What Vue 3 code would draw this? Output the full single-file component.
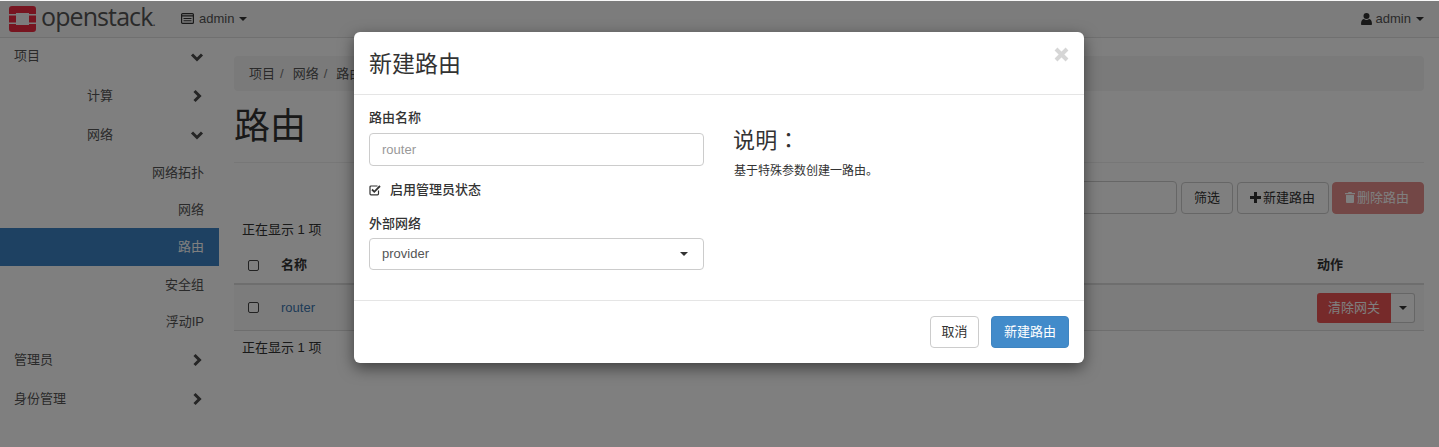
<script setup>
const tops = {
  project: '项目', compute: '计算', network: '网络'
}
const subs = [
  { label: '网络拓扑' },
  { label: '网络' },
  { label: '路由', active: true },
  { label: '安全组' },
  { label: '浮动IP' }
]
</script>

<template>
  <div class="page">
    <header class="navbar">
      <div class="brand">
        <svg class="logo" width="27" height="26" viewBox="0 0 27 26">
          <path fill="#ee2a40" d="M3 0h21a3 3 0 0 1 3 3v5h-7V7H7v1H0V3a3 3 0 0 1 3-3zM0 9.500h7v7H0zM20 9.500h7v7h-7zM0 18h7v1h13v-1h7v5a3 3 0 0 1-3 3H3a3 3 0 0 1-3-3z"/>
        </svg>
        <span class="brand-text">openstack<span class="dot">.</span></span>
      </div>
      <div class="nav-project">
        <svg width="13" height="11" viewBox="0 0 13 11"><rect x=".6" y=".6" width="11.8" height="9.8" rx="1" fill="none" stroke="#333" stroke-width="1.2"/><path d="M1 2.200h11v1.400H1zM2.500 5h8v1h-8zM2.500 7.200h8v1h-8z" fill="#333"/></svg>
        <span>admin</span><i class="caret"></i>
      </div>
      <div class="nav-user">
        <svg width="11" height="12" viewBox="0 0 11 12"><circle cx="5.500" cy="3" r="3" fill="#333"/><path d="M0 11c0-3.500 1.500-5 3-5 .7.600 1.500 1 2.500 1s1.800-.4 2.500-1c1.500 0 3 1.500 3 5 0 .6-.5 1-1 1H1c-.5 0-1-.4-1-1z" fill="#333"/></svg>
        <span>admin</span><i class="caret"></i>
      </div>
    </header>

    <div class="layout">
      <nav class="sidebar">
        <div class="item top first">{{ tops.project }}<svg class="chev" width="14" height="14" viewBox="0 0 14 14"><path d="M2 4.500l5 5 5-5"/></svg></div>
        <div class="item mid">{{ tops.compute }}<svg class="chev" width="14" height="14" viewBox="0 0 14 14"><path d="M4.500 2l5 5-5 5"/></svg></div>
        <div class="item mid">{{ tops.network }}<svg class="chev" width="14" height="14" viewBox="0 0 14 14"><path d="M2 4.500l5 5 5-5"/></svg></div>
        <div v-for="s in subs" :key="s.label + (s.active ? 1 : 0)" class="sub" :class="{ active: s.active }">{{ s.label }}</div>
        <div class="item top">管理员<svg class="chev" width="14" height="14" viewBox="0 0 14 14"><path d="M4.500 2l5 5-5 5"/></svg></div>
        <div class="item top">身份管理<svg class="chev" width="14" height="14" viewBox="0 0 14 14"><path d="M4.500 2l5 5-5 5"/></svg></div>
      </nav>

      <main class="content">
        <div class="breadcrumb"><span>项目</span><em>/</em><span>网络</span><em>/</em><span>路由</span></div>
        <h1 class="title">路由</h1>
        <div class="toolbar">
          <div class="filter-input"></div>
          <button class="btn">筛选</button>
          <button class="btn btn-add">
            <svg width="11" height="11" viewBox="0 0 11 11"><path d="M4 0h3v4h4v3H7v4H4V7H0V4h4z" fill="#333"/></svg>
            新建路由
          </button>
          <button class="btn btn-del">
            <svg width="10" height="11" viewBox="0 0 10 11"><path d="M3.500 0h3l.5 1h3v1.200H0V1h3zM1 3h8v7a1 1 0 0 1-1 1H2a1 1 0 0 1-1-1z" fill="#fff"/></svg>
            删除路由
          </button>
        </div>
        <div class="count">正在显示 1 项</div>
        <div class="thead">
          <i class="check"></i><b class="col-name">名称</b><b class="col-act">动作</b>
        </div>
        <div class="trow">
          <i class="check"></i><a class="col-name link">router</a>
          <div class="col-act split">
            <span class="split-main">清除网关</span><span class="split-caret"><i class="caret dark"></i></span>
          </div>
        </div>
        <div class="count bottom">正在显示 1 项</div>
      </main>
    </div>

    <div class="backdrop"></div>

    <section class="modal">
      <div class="modal-head">
        <h3>新建路由</h3>
        <svg class="close" width="15" height="15" viewBox="0 0 15 15"><path d="M2 2l11 11M13 2L2 13"/></svg>
      </div>
      <div class="modal-body">
        <div class="form-col">
          <label class="lbl">路由名称</label>
          <div class="field placeholder">router</div>
          <div class="checkline">
            <svg width="12" height="12" viewBox="0 0 12 12"><path d="M9.500 6.500V9.800a1 1 0 0 1-1 1H2a1 1 0 0 1-1-1V3a1 1 0 0 1 1-1h6.500" fill="none" stroke="#333" stroke-width="1.200"/><path d="M3 5.500l2.300 2.300L11 2" fill="none" stroke="#333" stroke-width="1.800"/></svg>
            <b>启用管理员状态</b>
          </div>
          <label class="lbl second">外部网络</label>
          <div class="field select"><span>provider</span><i class="caret"></i></div>
        </div>
        <div class="help-col">
          <h3>说明：</h3>
          <p>基于特殊参数创建一路由。</p>
        </div>
      </div>
      <div class="modal-foot">
        <button class="mbtn cancel">取消</button>
        <button class="mbtn primary">新建路由</button>
      </div>
    </section>
  </div>
</template>

<style>
html, body { margin: 0; padding: 0; background: #fff; }
</style>

<style scoped>
* { box-sizing: border-box; }
.page {
  position: relative;
  width: 1439px;
  height: 447px;
  overflow: hidden;
  background: #fff;
  color: #333;
  font: 13px/18px "Liberation Sans", "Noto Sans CJK SC", sans-serif;
}
.navbar {
  height: 38px;
  display: flex;
  align-items: center;
  background: #f8f8f8;
  border-bottom: 1px solid #e0e0e0;
  padding: 0 15px 0 9px;
}
.brand { display: flex; align-items: center; gap: 5px; width: 172px; }
.logo { width: 27px; height: 26px; flex: none; }
.brand-text { font: 500 25px/30px "Open Sans", sans-serif; letter-spacing: -0.9px; color: #555; }
.dot { font-size: 12px; }
.nav-project { display: flex; align-items: center; gap: 5px; color: #555; }
.nav-user { margin-left: auto; display: flex; align-items: center; gap: 4px; color: #555; }
.nav-user .caret { margin-left: 1px; }
.caret { display: inline-block; width: 0; height: 0; margin-left: 0; border-top: 4px solid #333; border-left: 4px solid transparent; border-right: 4px solid transparent; }

.layout { display: flex; }
.sidebar { width: 219px; flex: none; }
.item { height: 39px; display: flex; align-items: center; justify-content: space-between; padding: 0 15px 0 14px; color: #555; font-size: 13px; }
.item.first { height: 38px; padding-bottom: 2px; }
.item.first .chev { margin-top: 2px; }
.mid { padding-left: 87px; }
.sub { height: 37.4px; display: flex; align-items: center; justify-content: flex-end; padding-right: 15px; color: #555; }
.sub.active { background: #3d82c4; color: #fff; margin-top: -1px; height: 38.4px; }
.chev path { fill: none; stroke: #4b4b4b; stroke-width: 3; }

.content { flex: none; width: 1190px; margin-left: 15px; }
.breadcrumb { margin-top: 18px; height: 35px; background: #f5f5f5; border-radius: 4px; padding: 0 15px; display: flex; align-items: center; color: #555; }
.breadcrumb em { font-style: normal; margin: 0 9px 0 5px; color: #777; }
.title { margin: 0; height: 72px; padding-top: 14px; border-bottom: 1px solid #eee; font: 400 36px/43px "Liberation Sans", "Noto Sans CJK SC", sans-serif; color: #333; }
.toolbar { margin-top: 18px; height: 33px; display: flex; justify-content: flex-end; align-items: center; gap: 4px; }
.filter-input { width: 300px; height: 33px; border: 1px solid #ccc; border-radius: 4px; background: #fff; }
.btn { height: 32px; padding: 0 12px; border: 1px solid #ccc; border-radius: 4px; background: #fff; color: #333; font: inherit; display: flex; align-items: center; gap: 2px; }
.btn-add { width: 92px; }
.btn + .btn-del { margin-left: -1px; width: 92px; }
.btn-del { background: #d9534f; border-color: #d9534f; color: #fff; opacity: .65; }
.count { margin-top: 7px; height: 18px; padding-left: 8px; color: #333; }
.thead { display: flex; align-items: center; height: 38px; margin-top: 8px; border-bottom: 2px solid #ddd; padding-left: 14px; }
.trow { display: flex; align-items: center; height: 46px; background: #f9f9f9; border-bottom: 1px solid #ddd; padding-left: 14px; }
.check { width: 11px; height: 11px; border: 1.300px solid #444; border-radius: 2px; background: #fff; flex: none; }
.col-name { margin-left: 22px; }
.col-act { margin-left: auto; width: 107px; }
.link { color: #3c76af; }
.split { display: flex; height: 30px; }
.split-main { width: 74px; display: flex; align-items: center; justify-content: center; background: #ed5454; color: #fff; border-radius: 3px 0 0 3px; }
.split-caret { width: 24px; display: flex; align-items: center; justify-content: center; background: #fff; border: 1px solid #ccc; border-left: 0; border-radius: 0 3px 3px 0; }
.bottom { margin-top: 8px; }

.backdrop { position: absolute; inset: 1px 0 0 0; background: rgba(0,0,0,.5); }

.modal {
  position: absolute;
  left: 354px; top: 32px;
  width: 730px; height: 331px;
  background: #fff;
  border-radius: 6px;
  box-shadow: 0 5px 15px rgba(0,0,0,.5);
  display: flex;
  flex-direction: column;
}
.modal-head { height: 63px; padding: 2px 15px 0; display: flex; align-items: center; justify-content: space-between; border-bottom: 1px solid #e5e5e5; }
.modal-head h3 { margin: 0; font: 400 23px/30px "Liberation Sans", "Noto Sans CJK SC", sans-serif; color: #333; }
.close { margin-top: -20px; flex: none; }
.close path { fill: none; stroke: #d6d6d6; stroke-width: 4; }
.modal-body { flex: 1; display: flex; padding: 14px 15px 0; }
.form-col { width: 335px; }
.lbl { display: block; font-weight: 500; font-size: 13px; height: 18px; line-height: 18px; margin-bottom: 6px; color: #333; }
.lbl.second { margin-bottom: 5px; }
.field { height: 33px; border: 1px solid #ccc; border-radius: 4px; padding: 0 12px; display: flex; align-items: center; color: #555; }
.placeholder { color: #999; }
.select { justify-content: space-between; height: 32px; }
.select .caret { margin-right: 3px; }
.checkline { margin: 15px 0 16px; display: flex; align-items: center; gap: 9px; height: 18px; }
.checkline b { font-weight: 500; }
.help-col { margin-left: 30px; padding-top: 20px; }
.help-col h3 { margin: 0 0 10px -1px; font: 400 22px/24px "Liberation Sans", "Noto Sans CJK TC", sans-serif; letter-spacing: .3px; color: #333; }
.help-col p { margin: 0; font-size: 12px; line-height: 16px; color: #333; }
.modal-foot { height: 63px; border-top: 1px solid #e5e5e5; padding: 15px; display: flex; justify-content: flex-end; gap: 12px; }
.mbtn { height: 32px; padding: 0; border: 1px solid #ccc; border-radius: 4px; background: #fff; color: #333; font: inherit; }
.cancel { width: 49px; }
.primary { background: #428bca; border-color: #3f85c1; color: #fff; width: 78px; }
</style>
